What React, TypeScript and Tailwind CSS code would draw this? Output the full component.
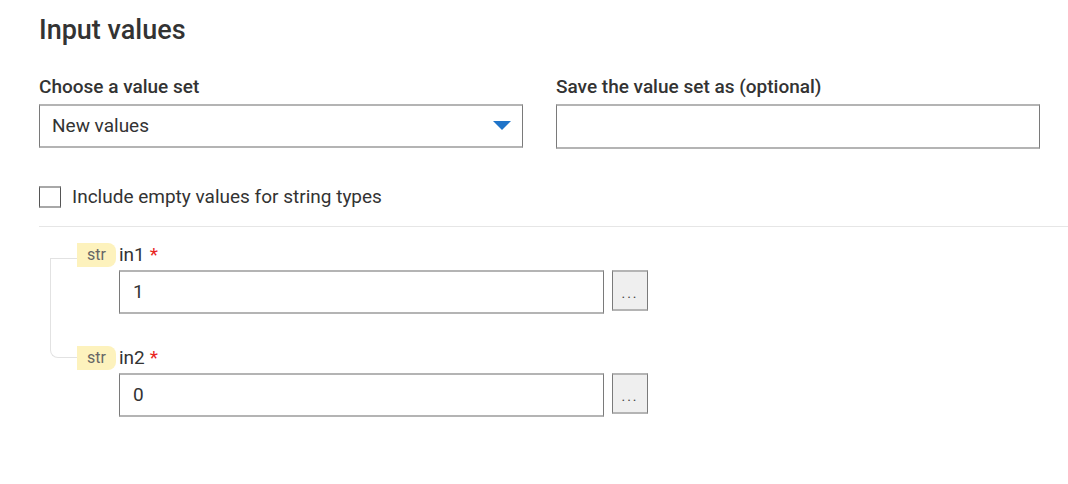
import React from 'react';

type Field = { name: string; value: string };

const fields: Field[] = [
  { name: 'in1', value: '1' },
  { name: 'in2', value: '0' },
];

const boxBorder = 'border-y-2 border-y-[#b4b4b4] border-x border-x-[#7a7a7a]';

const FieldRow: React.FC<{ field: Field }> = ({ field }) => (
  <div>
    <div className="flex items-center h-[24px]">
      <span className="w-[39px] h-[24px] flex items-center justify-center bg-[#fdf2bd] rounded-r-[8px] text-[16px] text-[#666]">
        str
      </span>
      <span className="ml-[3px] text-[19px] leading-[24px] text-[#333]">{field.name}</span>
      <span className="ml-[5px] text-[19px] leading-[24px] text-[#e8251e]">*</span>
    </div>
    <div className="flex items-start mt-[3px] ml-[42px]">
      <div className={`w-[485px] h-[44px] flex items-center pl-[13px] text-[19px] text-[#333] bg-white ${boxBorder}`}>
        {field.value}
      </div>
      <button className={`ml-[8px] w-[36px] h-[41px] bg-[#efefef] flex items-center justify-center pt-[4px] text-[14px] leading-none tracking-[2px] text-[#444] ${boxBorder}`}>
        ...
      </button>
    </div>
  </div>
);

export default function App() {
  return (
    <div className="w-[1068px] h-[484px] bg-white pl-[39px] pt-[14px] font-['Roboto',sans-serif] text-[#333]">
      <h1 className="text-[27px] leading-[32px] font-medium text-[#333]">Input values</h1>

      <div className="grid grid-cols-[484px_484px] gap-x-[33px] mt-[30px]">
        <div>
          <div className="text-[19px] leading-[22px] font-medium mb-[6px]">Choose a value set</div>
          <div className={`h-[44px] flex items-center justify-between pl-[12px] pr-[11px] text-[19px] ${boxBorder}`}>
            <span>New values</span>
            <svg width="18" height="10" viewBox="0 0 18 10">
              <path d="M0 0 L18 0 L9 9 Z" fill="#1f74c9" />
            </svg>
          </div>
        </div>
        <div>
          <div className="text-[19px] leading-[22px] font-medium mb-[6px]">Save the value set as (optional)</div>
          <div className={`h-[45px] ${boxBorder}`} />
        </div>
      </div>

      <label className="flex items-center mt-[37px]">
        <span className="w-[22px] h-[22px] bg-white border-y-2 border-y-[#a8a8a8] border-x border-x-[#555]" />
        <span className="ml-[11px] text-[19px] leading-[22px] text-[#333]">Include empty values for string types</span>
      </label>

      <div className="mt-[18px] h-px bg-[#e6e6e6]" />

      <div className="relative mt-[16px] pl-[38px]">
        <div className="absolute left-[11px] top-[15px] w-[27px] h-[100px] border-l border-t border-b border-[#e2e2e2] rounded-bl-[8px]" />
        <div className="flex flex-col gap-[32px]">
          {fields.map((f) => (
            <FieldRow key={f.name} field={f} />
          ))}
        </div>
      </div>
    </div>
  );
}
